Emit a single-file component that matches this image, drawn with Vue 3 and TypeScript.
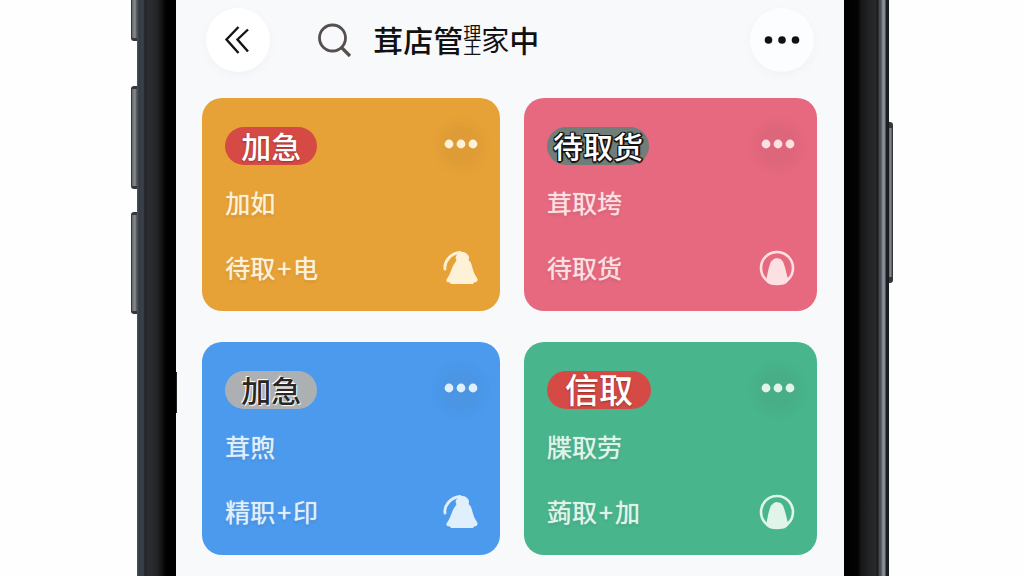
<script setup lang="ts">
interface OrderCard {
  tone: string
  badge: string
  badgeStyle: string
  detail: string
  status: string
  extra?: string
  icon: 'bell' | 'ring'
}

const cards: OrderCard[] = [
  { tone: 'amber', badge: '加急', badgeStyle: 'red', detail: '加如', status: '待取', extra: '电', icon: 'bell' },
  { tone: 'pink', badge: '待取货', badgeStyle: 'slate', detail: '茸取垮', status: '待取货', icon: 'ring' },
  { tone: 'blue', badge: '加急', badgeStyle: 'silver', detail: '茸煦', status: '精职', extra: '印', icon: 'bell' },
  { tone: 'green', badge: '信取', badgeStyle: 'red large', detail: '牒取劳', status: '蒟取', extra: '加', icon: 'ring' },
]
</script>

<template>
  <div class="stage">
    <div class="phone">
      <div class="bezel left">
        <span class="key mute"></span>
        <span class="key up"></span>
        <span class="key down"></span>
        <span class="notch"></span>
      </div>
      <main class="screen">
        <header class="bar">
          <button class="round back" type="button" aria-label="返回">
            <svg width="28" height="32" viewBox="0 0 28 32" fill="none" stroke="#151515" stroke-width="2.400">
              <path d="M14.500 3 2.500 15.500 14.500 29M24 5.500 13.500 15.500 24 27.500" />
            </svg>
          </button>
          <button class="search" type="button" aria-label="搜索">
            <svg width="36" height="36" viewBox="0 0 36 36" fill="none" stroke="#55504e">
              <circle cx="15.500" cy="16" r="13" stroke-width="2.800" />
              <path d="M25 26 33 34" stroke-width="3.200" />
            </svg>
          </button>
          <h1>茸店管<span class="mini">理王</span><span class="mid">家</span>中</h1>
          <button class="round more" type="button" aria-label="更多">
            <svg width="36" height="10" viewBox="0 0 36 10" fill="#111">
              <circle cx="4.500" cy="5" r="3.800" />
              <circle cx="18" cy="5" r="3.800" />
              <circle cx="31.500" cy="5" r="3.800" />
            </svg>
          </button>
        </header>
        <section class="grid">
          <article v-for="(card, i) in cards" :key="i" class="card" :class="card.tone">
            <div class="top">
              <span class="badge" :class="card.badgeStyle">{{ card.badge }}</span>
              <button class="dots" type="button" aria-label="更多">
                <svg width="34" height="10" viewBox="0 0 34 10" fill="currentColor">
                  <circle cx="5" cy="5" r="4.400" />
                  <circle cx="17" cy="5" r="4.400" />
                  <circle cx="29" cy="5" r="4.400" />
                </svg>
              </button>
            </div>
            <p class="detail">{{ card.detail }}</p>
            <div class="bottom">
              <p>{{ card.status }}<template v-if="card.extra"><span class="plus">+</span>{{ card.extra }}</template></p>
              <svg v-if="card.icon === 'bell'" width="36" height="38" viewBox="0 0 36 38">
                <path d="M15 3.500C18 2 23 2.500 25 5C27 6.500 27.500 9 26.500 11L28.500 13C29.500 15 30 17 30.500 19C31.500 23 33 26 35 29C36.500 31.500 35 33.500 32 33.500L31 35L9 35L8 33.500C4 33.500 3.500 31.500 5.500 29C8 25.500 9 21.500 10.500 18C11.500 15 14 13 14.500 11C13 9 13.500 7 15.500 5.500Z" fill="currentColor" />
                <path d="M3 20C2 13 8 4.500 18 3.500" fill="none" stroke="currentColor" stroke-width="2.800" stroke-linecap="round" />
              </svg>
              <svg v-else width="36" height="38" viewBox="0 0 36 38">
                <circle cx="18" cy="19" r="16" fill="none" stroke="currentColor" stroke-width="2.600" />
                <path d="M7 32C8.500 26 9 20 11 15C12 13 12 11.500 13.500 11.500C14 9.500 16 10 17 9C19 9 20 10 22 10C22 11.500 24.500 12 24.500 14C27 20 27.500 26 29.500 31C29 33 27 35 25 35.500L12 35.500C10 35 8 34 7 32Z" fill="currentColor" />
              </svg>
            </div>
          </article>
        </section>
      </main>
      <div class="bezel right"><span class="key power"></span></div>
    </div>
  </div>
</template>

<style>
body {
  margin: 0;
  background: #fefefe;
}
</style>

<style scoped>
.stage {
  display: grid;
  grid-template-columns: minmax(0, 752fr);
  padding: 0 13.2% 0 13.4%;
  min-height: 100vh;
  overflow: hidden;
  font-family: "Noto Sans CJK SC", "Noto Sans", sans-serif;
}
.phone {
  display: grid;
  grid-template-columns: 39px minmax(0, 1fr) 45px;
}
.bezel {
  position: relative;
}
.left {
  background: linear-gradient(90deg, #50565b 0, #343a44 2px, #3c424c 6px, #202329 8px, #2b2d30 11px, #242527 20px, #111 25px, #000 29px, #000 100%);
}
.right {
  background: linear-gradient(90deg, #000 0, #030303 14px, #171718 17px, #222324 25px, #29292b 32px, #151618 34px, #454950 35px, #50545a 37px, #8d949c 39px, #7d848c 41px, #202226 42px, #17191c 100%);
}
.key {
  position: absolute;
  left: -6px;
  width: 6px;
  box-sizing: border-box;
  border: solid #34383b;
  border-width: 3px 0 3px 1px;
  border-radius: 3px 0 0 3px;
  background: linear-gradient(90deg, #62686a, #878c8d 60%, #4a4f54);
}
.mute {
  top: -4px;
  height: 45px;
}
.up {
  top: 86px;
  height: 103px;
}
.down {
  top: 212px;
  height: 102px;
}
.power {
  top: 122px;
  left: auto;
  right: -4px;
  width: 4px;
  height: 161px;
  border-width: 6px 1px 6px 0;
  border-radius: 0 3px 3px 0;
}
.notch {
  position: absolute;
  top: 372px;
  right: -1px;
  width: 1px;
  height: 41px;
  background: #24221e;
}
.screen {
  padding: 8px 27px 21px 26px;
  background: #f8f9fb;
}
button {
  padding: 0;
  border: 0;
  background: none;
  color: inherit;
  cursor: pointer;
}
svg {
  display: block;
}
.bar {
  display: flex;
  align-items: center;
  padding: 0 3px 0 4px;
  margin-bottom: 26px;
}
.round {
  display: flex;
  align-items: center;
  justify-content: center;
  width: 64px;
  height: 64px;
  border-radius: 50%;
  background: #fff;
  box-shadow: 0 3px 10px rgba(60, 70, 90, 0.04);
}
.more {
  margin-left: auto;
  background: #fcfdfe;
}
.search {
  margin-left: 47px;
}
h1 {
  display: flex;
  align-items: center;
  margin: 0 0 0 20px;
  padding-bottom: 2px;
  font-size: 30px;
  line-height: 40px;
  font-weight: 500;
  color: #111;
}
.mini {
  width: 18px;
  font-size: 18px;
  line-height: 14px;
  font-weight: 400;
}
.mid {
  font-size: 28px;
  font-weight: 400;
}
.grid {
  display: grid;
  grid-template-columns: minmax(0, 298fr) minmax(0, 293fr);
  gap: 31px 24px;
}
.card {
  padding: 29px 22px 24px 23px;
  border-radius: 20px;
}
.amber {
  background: #e7a237;
  color: #fdf1d8;
}
.pink {
  background: #e6697f;
  color: #fde0e2;
}
.blue {
  background: #4b9aee;
  color: #e0effc;
}
.green {
  background: #48b58d;
  color: #e0f4ea;
}
.top,
.bottom {
  display: flex;
  justify-content: space-between;
}
.top {
  height: 38px;
}
.badge {
  padding: 0 16px 2px;
  border-radius: 20px;
  font-size: 30px;
  line-height: 36px;
  font-weight: 500;
  color: #fff;
}
.red {
  background: #d64a45;
  text-shadow: 0 1px 2px rgba(90, 20, 10, 0.5);
}
.large {
  padding: 0 18px 2px;
  font-size: 34px;
}
.slate {
  padding: 0 6px 2px;
  background: #707d79;
  text-shadow: -1px -1px 0 #111, 1px -1px 0 #111, -1px 1px 0 #111, 1px 1px 0 #111, 0 2px 1px #111, 2px 0 1px #111;
}
.silver {
  background: #adb0b3;
  color: #292725;
  text-shadow: -1px -1px 0 #fff, 1px 1px 1px #fff;
}
.dots {
  align-self: flex-start;
  display: flex;
  align-items: center;
  height: 34px;
  border-radius: 50%;
  background: rgba(80, 50, 40, 0.05);
  box-shadow: 0 2px 12px 6px rgba(80, 50, 40, 0.05);
}
p {
  margin: 0;
  font-size: 25px;
  line-height: 36px;
  font-weight: 400;
  text-shadow: 0 0 1px currentColor, 0 2px 3px rgba(60, 40, 30, 0.15);
}
.detail {
  margin: 19px 0 29px;
}
.plus {
  padding: 0 2px;
}
</style>
